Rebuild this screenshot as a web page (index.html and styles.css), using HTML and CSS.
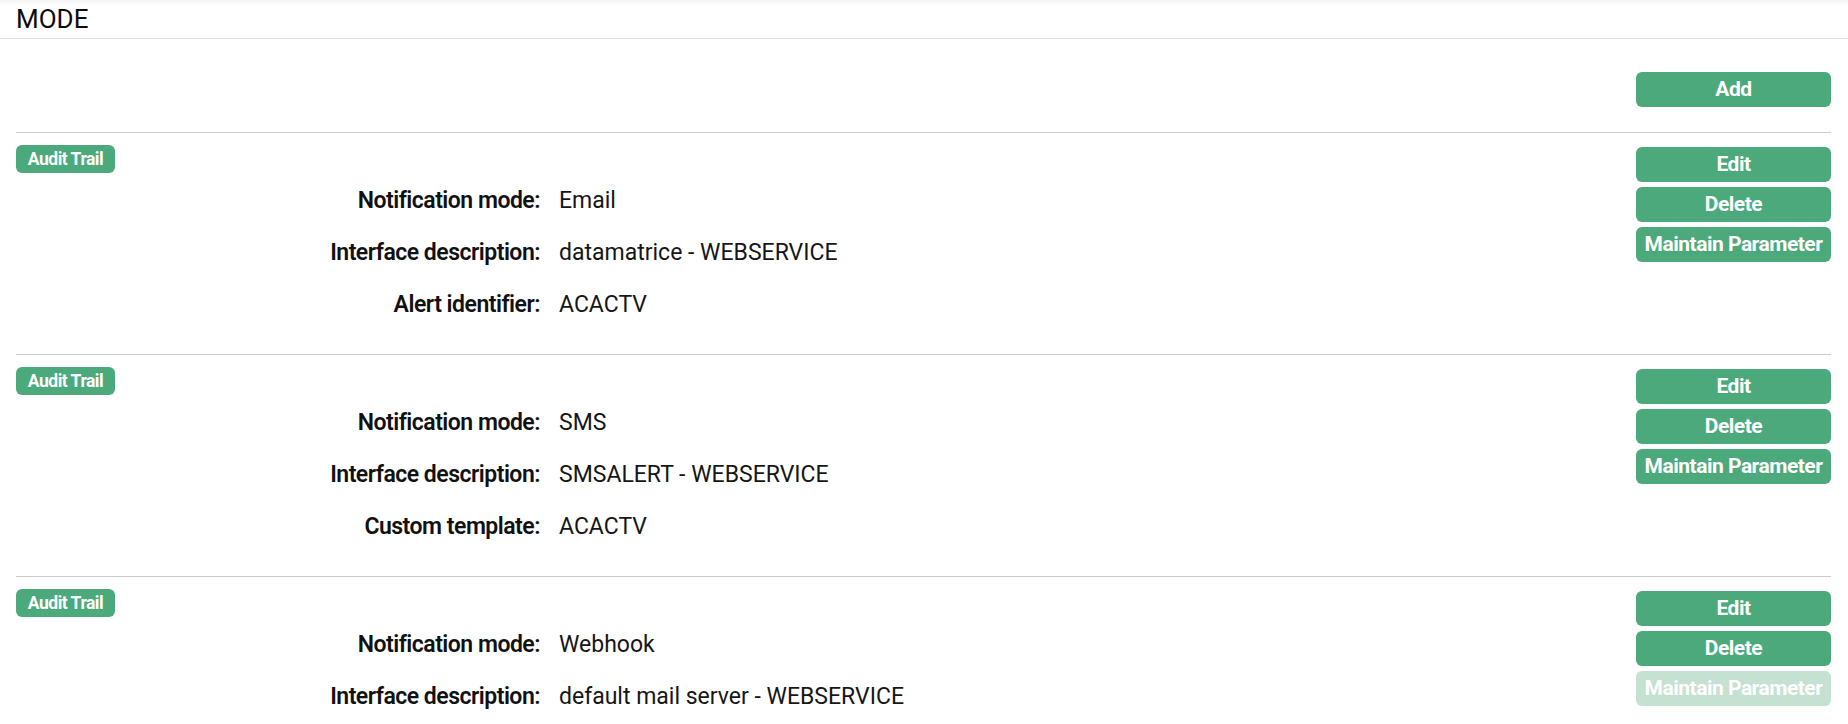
FILE: index.html
```html
<!DOCTYPE html>
<html>
<head>
<meta charset="utf-8">
<title>Mode</title>
<link rel="stylesheet" href="styles.css">
</head>
<body>
<header class="page-header">
  <h1 class="page-title">MODE</h1>
</header>
<div class="toolbar">
  <button class="btn">Add</button>
</div>

<section class="mode-item">
  <div class="mode-main">
    <span class="badge">Audit Trail</span>
    <dl class="fields">
      <dt>Notification mode:</dt><dd>Email</dd>
      <dt>Interface description:</dt><dd>datamatrice - WEBSERVICE</dd>
      <dt>Alert identifier:</dt><dd>ACACTV</dd>
    </dl>
  </div>
  <div class="actions">
    <button class="btn">Edit</button>
    <button class="btn">Delete</button>
    <button class="btn">Maintain Parameter</button>
  </div>
</section>

<section class="mode-item">
  <div class="mode-main">
    <span class="badge">Audit Trail</span>
    <dl class="fields">
      <dt>Notification mode:</dt><dd>SMS</dd>
      <dt>Interface description:</dt><dd>SMSALERT - WEBSERVICE</dd>
      <dt>Custom template:</dt><dd>ACACTV</dd>
    </dl>
  </div>
  <div class="actions">
    <button class="btn">Edit</button>
    <button class="btn">Delete</button>
    <button class="btn">Maintain Parameter</button>
  </div>
</section>

<section class="mode-item">
  <div class="mode-main">
    <span class="badge">Audit Trail</span>
    <dl class="fields">
      <dt>Notification mode:</dt><dd>Webhook</dd>
      <dt>Interface description:</dt><dd>default mail server - WEBSERVICE</dd>
    </dl>
  </div>
  <div class="actions">
    <button class="btn">Edit</button>
    <button class="btn">Delete</button>
    <button class="btn btn-disabled" disabled>Maintain Parameter</button>
  </div>
</section>
</body>
</html>
```

FILE: styles.css
```css
* { box-sizing: border-box; }

html, body {
  margin: 0;
  padding: 0;
  background: #ffffff;
}

body {
  font-family: Roboto, "Liberation Sans", sans-serif;
  color: #141414;
  overflow: hidden;
}

.page-header {
  height: 39px;
  border-bottom: 1px solid #e0e0e0;
  box-shadow: inset 0 5px 5px -3px rgba(0, 0, 0, 0.06);
  padding-left: 16px;
}

.page-title {
  margin: 0;
  font-weight: 400;
  font-size: 26px;
  line-height: 38px;
  color: #0c0c0c;
}

.toolbar {
  height: 93px;
  display: flex;
  justify-content: flex-end;
  align-items: flex-start;
  padding: 33px 17px 0 16px;
}

.btn {
  width: 195px;
  height: 35px;
  border: none;
  border-radius: 6px;
  background: #4ba97b;
  color: #ffffff;
  font-family: inherit;
  font-weight: 700;
  font-size: 21px;
  letter-spacing: -0.5px;
  line-height: 35px;
  padding: 0;
  text-align: center;
  white-space: nowrap;
  cursor: pointer;
}

.btn-disabled {
  background: #c4e1d2;
  cursor: default;
}

.mode-item {
  margin: 0 17px 0 16px;
  border-top: 1px solid #cccccc;
  padding: 12px 0 24px;
  display: flex;
  justify-content: space-between;
  align-items: flex-start;
}

.mode-main {
  flex: 1;
}

.badge {
  display: inline-block;
  height: 28px;
  width: 99px;
  border-radius: 6px;
  background: #4ba97b;
  color: #ffffff;
  font-weight: 700;
  font-size: 17.5px;
  letter-spacing: -0.5px;
  line-height: 28px;
  text-align: center;
  vertical-align: top;
}

.fields {
  margin: 0;
  display: grid;
  grid-template-columns: 524px 1fr;
  grid-auto-rows: 52px;
  column-gap: 19px;
  align-items: center;
  font-size: 23px;
  line-height: 28px;
  padding-top: 1px;
}

.fields dt {
  text-align: right;
  font-weight: 600;
  letter-spacing: -0.5px;
  color: #111111;
  padding-top: 2px;
}

.fields dd {
  margin: 0;
  font-weight: 400;
  letter-spacing: 0;
  color: #161616;
  padding-top: 2px;
}

.actions {
  display: flex;
  flex-direction: column;
  gap: 5px;
  margin-top: 2px;
}
```
